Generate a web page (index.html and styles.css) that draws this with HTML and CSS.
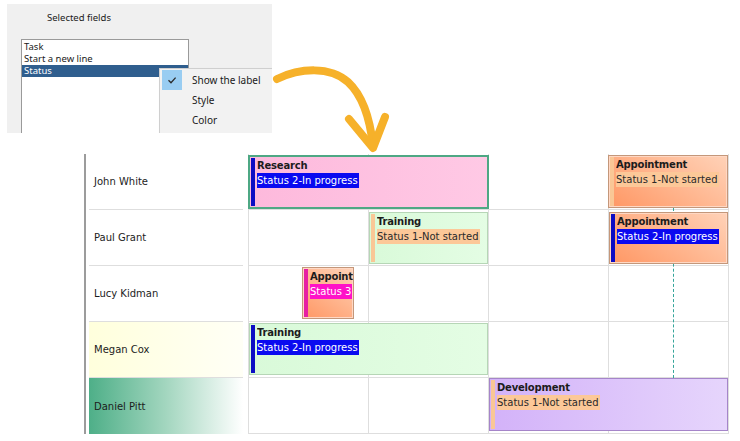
FILE: index.html
```html
<!DOCTYPE html>
<html>
<head>
<meta charset="utf-8">
<link rel="stylesheet" href="styles.css">
</head>
<body>
<div class="top">
  <div class="dialog">
    <div class="dlg-title">Selected fields</div>
    <div class="listbox">
      <div class="li">Task</div>
      <div class="li">Start a new line</div>
      <div class="li sel">Status</div>
    </div>
    <div class="menu">
      <div class="mi"><span class="chk on"><svg width="20" height="20" viewBox="0 0 20 20"><path d="M6.5 10.2 L9 12.7 L13.6 7.6" fill="none" stroke="#2b2b2b" stroke-width="1.3"/></svg></span><span>Show the label</span></div>
      <div class="mi"><span class="chk"></span><span>Style</span></div>
      <div class="mi"><span class="chk"></span><span>Color</span></div>
    </div>
  </div>
  <svg class="arrow" width="130" height="100" viewBox="265 60 130 100">
    <path d="M277 79 C300 68 330 66 348 82 C362 95 370 118 373 146" fill="none" stroke="#f6b12a" stroke-width="8" stroke-linecap="round"/>
    <path d="M349 119 L373 148 L385 117" fill="none" stroke="#f6b12a" stroke-width="8" stroke-linecap="round" stroke-linejoin="round"/>
  </svg>
</div>

<div class="schedule">
  <div class="now-line"></div>

  <div class="rh r1">John White</div>
  <div class="rh r2">Paul Grant</div>
  <div class="rh r3">Lucy Kidman</div>
  <div class="rh r4 yellow">Megan Cox</div>
  <div class="rh r5 green">Daniel Pitt</div>

  <div class="cell r1 c2"></div><div class="cell r1 c3"></div><div class="cell r1 c4"></div><div class="cell r1 c5"></div>
  <div class="cell r2 c2"></div><div class="cell r2 c3"></div><div class="cell r2 c4"></div><div class="cell r2 c5"></div>
  <div class="cell r3 c2"></div><div class="cell r3 c3"></div><div class="cell r3 c4"></div><div class="cell r3 c5"></div>
  <div class="cell r4 c2"></div><div class="cell r4 c3"></div><div class="cell r4 c4"></div><div class="cell r4 c5"></div>
  <div class="cell r5 c2"></div><div class="cell r5 c3"></div><div class="cell r5 c4"></div><div class="cell r5 c5"></div>

  <div class="ev pink selected ev-research">
    <div class="bar blue"></div>
    <div class="txt"><div class="ttl">Research</div><div class="st"><span class="hl s2">Status 2-In progress</span></div></div>
  </div>
  <div class="ev orange ev-app1">
    <div class="bar peach"></div>
    <div class="txt"><div class="ttl">Appointment</div><div class="st"><span class="hl s1">Status 1-Not started</span></div></div>
  </div>
  <div class="ev mint ev-train1">
    <div class="bar peach"></div>
    <div class="txt"><div class="ttl">Training</div><div class="st"><span class="hl s1">Status 1-Not started</span></div></div>
  </div>
  <div class="ev orange ev-app2">
    <div class="bar blue"></div>
    <div class="txt"><div class="ttl">Appointment</div><div class="st"><span class="hl s2">Status 2-In progress</span></div></div>
  </div>
  <div class="ev orange ev-app3">
    <div class="bar magenta"></div>
    <div class="txt"><div class="ttl">Appointment</div><div class="st"><span class="hl s3">Status 3</span></div></div>
  </div>
  <div class="ev mint ev-train2">
    <div class="bar blue"></div>
    <div class="txt"><div class="ttl">Training</div><div class="st"><span class="hl s2">Status 2-In progress</span></div></div>
  </div>
  <div class="ev purple ev-dev">
    <div class="bar peach"></div>
    <div class="txt"><div class="ttl">Development</div><div class="st"><span class="hl s1">Status 1-Not started</span></div></div>
  </div>
</div>
</body>
</html>
```
FILE: styles.css
```css
* { box-sizing: border-box; }
html, body { margin: 0; padding: 0; background: #ffffff; }
body { width: 740px; height: 441px; overflow: hidden; }

.top { position: relative; height: 133px; padding: 4px 0 0 7px; }

.dialog {
  position: relative;
  width: 265px;
  height: 129px;
  background: #f0f0f0;
  font-family: "Noto Sans", sans-serif;
  font-size: 9.5px;
  color: #1a1a1a;
  overflow: hidden;
}
.dlg-title { padding: 7px 0 0 40px; line-height: 14px; height: 35px; }

.listbox {
  margin-left: 14px;
  width: 168px;
  height: 100px;
  background: #ffffff;
  border: 1px solid #9a9a9a;
  padding-top: 1px;
}
.li { line-height: 12px; height: 12px; padding-left: 2px; white-space: nowrap; }
.li.sel { background: #2f5e8e; color: #ffffff; }

.menu {
  position: absolute;
  left: 152px;
  top: 64px;
  width: 120px;
  height: 70px;
  background: #f2f2f2;
  border: 1px solid #cfcfcf;
  padding: 1px 0 0 2px;
  box-shadow: 1px 1px 2px rgba(0,0,0,0.08);
  font-size: 10px;
}
.mi { display: flex; align-items: center; height: 20px; }
.chk { width: 20px; height: 20px; margin-right: 10px; display: block; }
.chk.on { background: #99cdf2; }
.chk svg { display: block; }

.arrow { position: absolute; left: 265px; top: 60px; z-index: 5; }

.schedule {
  position: relative;
  margin: 21px 0 0 84px;
  width: 645px;
  display: grid;
  grid-template-columns: 162px repeat(4, 120px);
  grid-template-rows: 56px 56px 56px 56px 56px;
  border-left: 2px solid #9c9c9c;
  border-right: 1px solid #dedede;
  font-family: "DejaVu Sans", sans-serif;
  font-size: 10px;
  color: #1c1c1c;
}

.r1 { grid-row: 1; } .r2 { grid-row: 2; } .r3 { grid-row: 3; } .r4 { grid-row: 4; } .r5 { grid-row: 5; }
.c2 { grid-column: 2; } .c3 { grid-column: 3; } .c4 { grid-column: 4; } .c5 { grid-column: 5; }

.rh {
  grid-column: 1;
  margin: 0 5px 0 3px;
  padding-left: 5px;
  display: flex;
  align-items: center;
  border-bottom: 1px solid #dedede;
}
.rh.r5 { border-bottom: none; }
.rh.yellow { background: linear-gradient(90deg, #ffffdc, #fffff6); }
.rh.green { background: linear-gradient(90deg, #4eaf88 0%, #a3d6bf 50%, #ffffff 100%); }

.cell { border-left: 1px solid #dedede; border-bottom: 1px solid #dedede; }

.now-line {
  position: absolute;
  left: 587px;
  top: 54px;
  height: 170px;
  border-left: 1px dashed #35a59a;
  z-index: 1;
}

.ev {
  position: relative;
  z-index: 2;
  display: flex;
  overflow: hidden;
  border: 1px solid #c4977a;
  white-space: nowrap;
}
.ev .bar { width: 4px; margin: 1px 2px 1px 1px; flex: none; }
.ev .txt { padding-top: 1px; overflow: hidden; }
.ttl { font-weight: bold; line-height: 15px; height: 15px; letter-spacing: -0.2px; }
.st { line-height: 15px; height: 15px; }
.hl { display: inline-block; padding-right: 1px; }
.hl.s1 { background: #fcc898; color: #2a2a2a; }
.hl.s2 { background: #0a0af0; color: #ffffff; }
.hl.s3 { background: #ff12c8; color: #ffffff; }

.bar.blue { background: #0c0cc4; }
.bar.peach { background: #f9c796; }
.bar.magenta { background: #e61fa3; }

.pink { background: linear-gradient(90deg, #fdb9dc, #ffc9e5); }
.selected { border: 2px solid #4ea884; }
.orange {
  background: linear-gradient(35deg, #ff9764 0%, #ffb892 55%, #ffd2b8 100%);
  box-shadow: inset 0 0 0 1px #ffd8c4;
}
.mint { background: linear-gradient(90deg, #d9fad9, #e4fde4); border-color: #b6d6b6; }
.purple { background: linear-gradient(90deg, #d3b2f9, #e6d5fc); border-color: #a585c9; }

.ev-research { grid-column: 2 / 4; grid-row: 1; margin: 1px -1px 1px 0; }
.ev-app1 { grid-column: 5; grid-row: 1; margin: 1px 0 2px 0; }
.ev-train1 { grid-column: 3; grid-row: 2; margin: 2px 0 2px 1px; }
.ev-app2 { grid-column: 5; grid-row: 2; margin: 2px 0 2px 1px; }
.ev-app3 { grid-column: 2; grid-row: 3; margin: 1px 0 3px 54px; width: 52px; }
.ev-train2 { grid-column: 2 / 4; grid-row: 4; margin: 1px 0 3px 1px; }
.ev-dev { grid-column: 4 / 6; grid-row: 5; margin: 0 0 3px 1px; }
```
